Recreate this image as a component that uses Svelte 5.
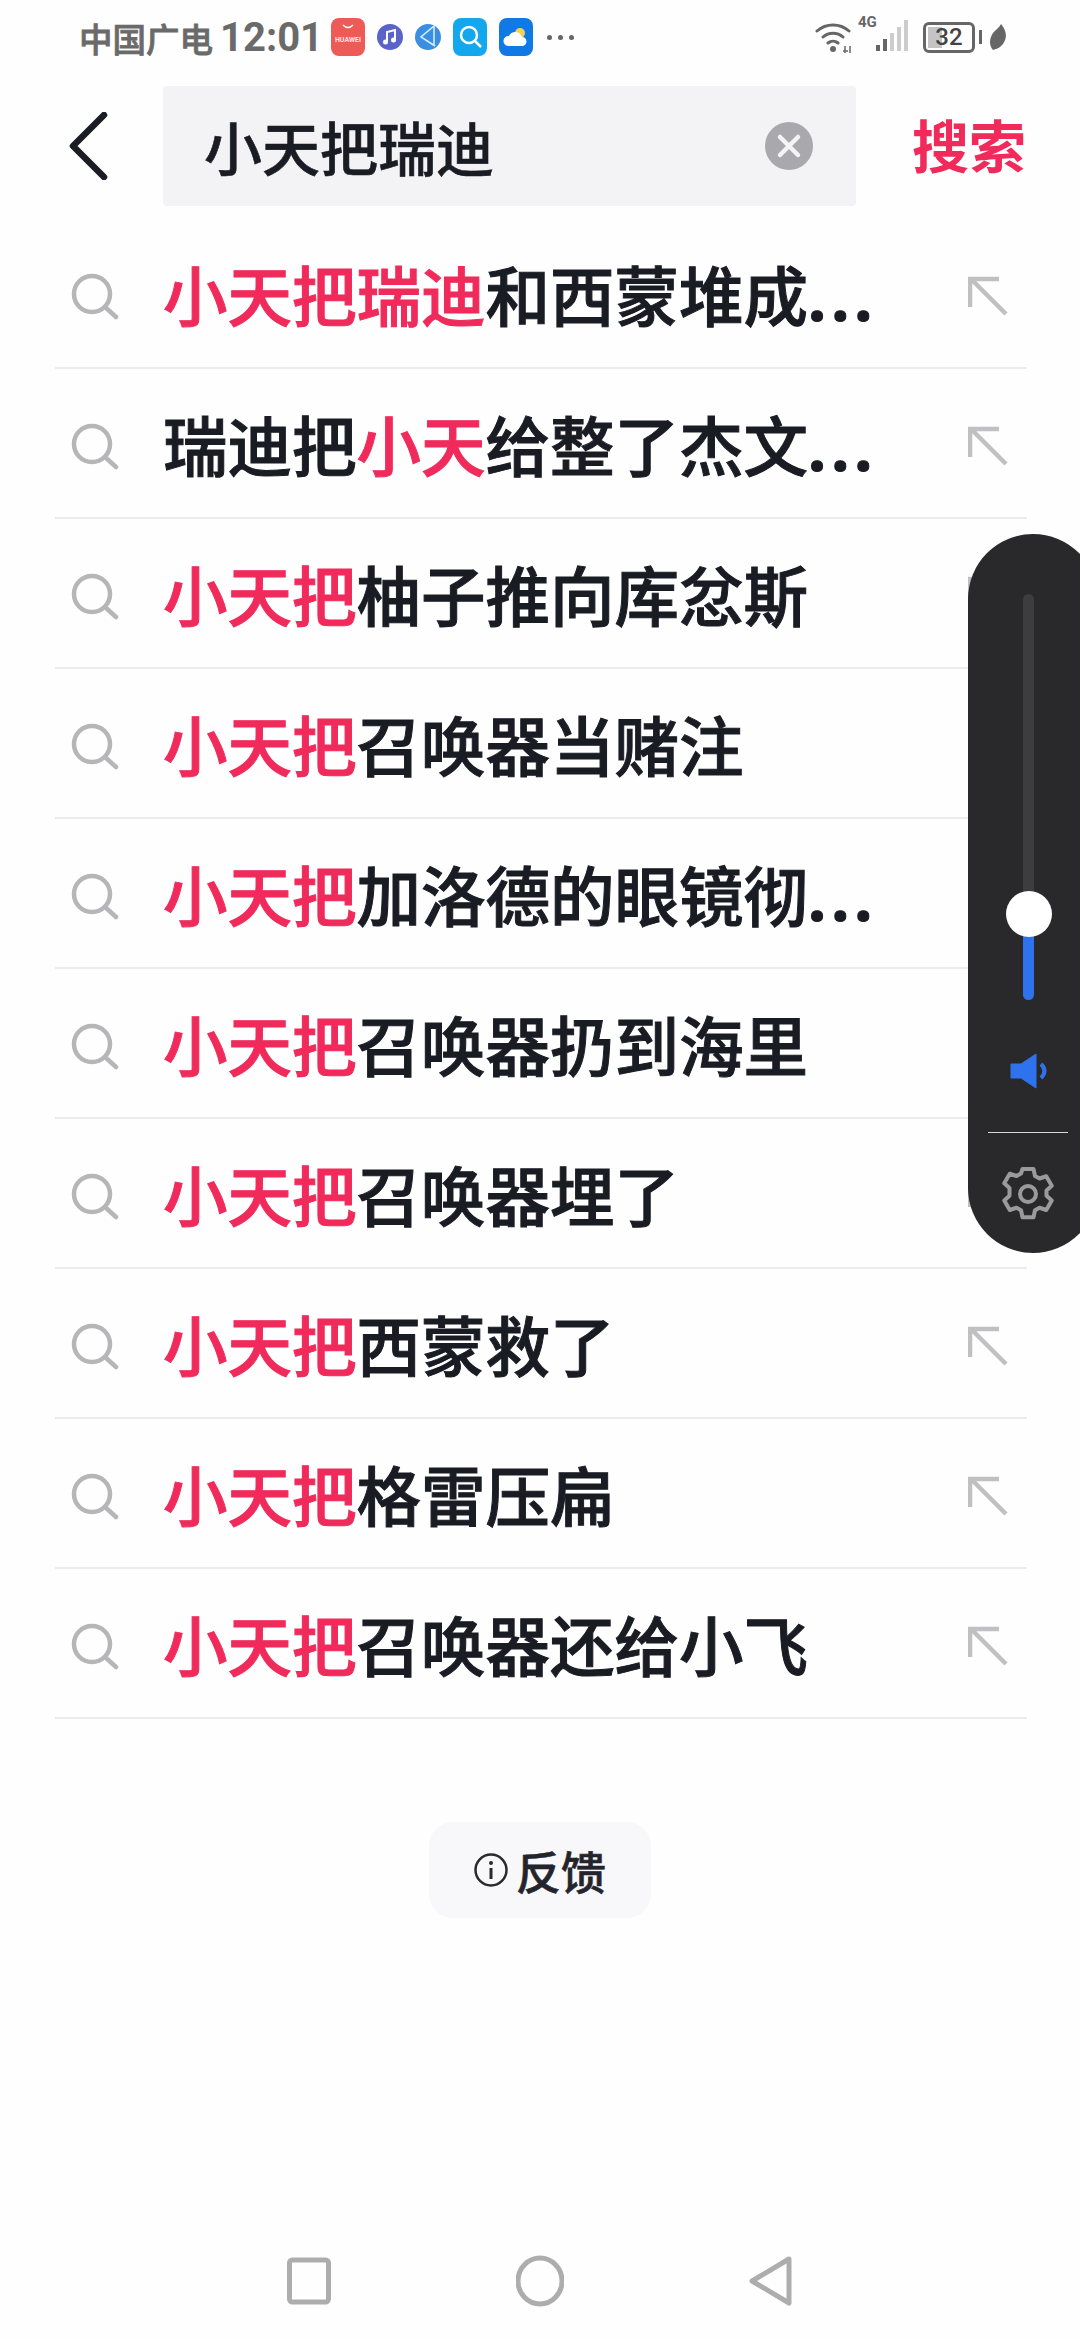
<script lang="ts">
  const rows = [
    { pre: "", hit: "小天把瑞迪", post: "和西蒙堆成", cut: true },
    { pre: "瑞迪把", hit: "小天", post: "给整了杰文", cut: true },
    { pre: "", hit: "小天把", post: "柚子推向库忿斯" },
    { pre: "", hit: "小天把", post: "召唤器当赌注" },
    { pre: "", hit: "小天把", post: "加洛德的眼镜彻", cut: true },
    { pre: "", hit: "小天把", post: "召唤器扔到海里" },
    { pre: "", hit: "小天把", post: "召唤器埋了" },
    { pre: "", hit: "小天把", post: "西蒙救了" },
    { pre: "", hit: "小天把", post: "格雷压扁" },
    { pre: "", hit: "小天把", post: "召唤器还给小飞" },
  ];
</script>

<div class="page">
  <div class="status">
    <div class="status-left">
      <span class="carrier">中国广电</span>
      <span class="clock">12:01</span>
      <svg class="notif" width="34" height="38" viewBox="0 0 34 38">
        <rect width="34" height="38" rx="8" fill="#ee5a55" />
        <path d="M12 7q5 5 10 0" fill="none" stroke="#fff" stroke-width="1.500" />
        <text x="17" y="24" text-anchor="middle" font-size="7" font-weight="700" fill="#fde3e1" font-family="Roboto, sans-serif">HUAWEI</text>
      </svg>
      <svg class="notif" width="26" height="28" viewBox="0 0 26 28">
        <circle cx="13" cy="14" r="13" fill="#5a64c8" />
        <path d="M10 19V9l8-2v10" fill="none" stroke="#fff" stroke-width="2" />
        <circle cx="8.500" cy="19" r="2.500" fill="#fff" />
        <circle cx="16.500" cy="17" r="2.500" fill="#fff" />
      </svg>
      <svg class="notif" width="26" height="28" viewBox="0 0 26 28">
        <circle cx="13" cy="14" r="13" fill="#3b8fe0" />
        <path d="M19 3L6 14l14 9M19 3v20" fill="none" stroke="#dcefff" stroke-width="1.500" />
      </svg>
      <svg class="notif" width="34" height="38" viewBox="0 0 34 38">
        <rect width="34" height="38" rx="8" fill="#13a8ee" />
        <circle cx="16" cy="17" r="8" fill="none" stroke="#fff" stroke-width="2.500" />
        <path d="M22 23l6 6" stroke="#fff" stroke-width="2.500" />
      </svg>
      <svg class="notif" width="34" height="38" viewBox="0 0 34 38">
        <rect width="34" height="38" rx="8" fill="#0f7ae5" />
        <circle cx="21" cy="15" r="5" fill="#f6cf55" />
        <path d="M9 28a5 5 0 0 1 1-10 7 7 0 0 1 13 1 4.500 4.500 0 0 1 0 9z" fill="#fff" />
      </svg>
      <span class="more"><i></i><i></i><i></i></span>
    </div>
    <div class="status-right">
      <svg width="38" height="34" viewBox="0 0 38 34">
        <path d="M2 11a24 24 0 0 1 32 0M8 17a15 15 0 0 1 20 0M13 23a8 8 0 0 1 10 0" fill="none" stroke="#666" stroke-width="3" stroke-linecap="round" />
        <circle cx="18" cy="29" r="3" fill="#666" />
        <path d="M28 31h5M30 26v7M35 26v7" stroke="#666" stroke-width="1.500" />
      </svg>
      <div class="net">
        <span class="net-label">4G</span>
        <svg width="34" height="32" viewBox="0 0 34 32">
          <rect x="0" y="26" width="4" height="6" fill="#666" />
          <rect x="7" y="20" width="4" height="12" fill="#666" />
          <rect x="14" y="14" width="4" height="18" fill="#ccc" />
          <rect x="21" y="8" width="4" height="24" fill="#ccc" />
          <rect x="28" y="1" width="4" height="31" fill="#ccc" />
        </svg>
      </div>
      <div class="battery">
        <div class="battery-fill"></div>
        <span>32</span>
      </div>
      <div class="battery-nub"></div>
      <svg width="18" height="28" viewBox="0 0 18 28">
        <path d="M12 1c5 6 7 13 2 20-3 4-7 5-10 6C0 22 0 16 4 10c2-3 6-5 8-9z" fill="#666" />
      </svg>
    </div>
  </div>

  <div class="search-bar">
    <svg class="back" width="40" height="68" viewBox="0 0 40 68">
      <path d="M36 3L5 34l31 31" fill="none" stroke="#1c1d24" stroke-width="6.500" stroke-linecap="round" stroke-linejoin="round" />
    </svg>
    <div class="field">
      <span class="query">小天把瑞迪</span>
      <svg width="48" height="48" viewBox="0 0 48 48">
        <circle cx="24" cy="24" r="24" fill="#a9a9ad" />
        <path d="M15 15l18 18M33 15L15 33" stroke="#f4f4f6" stroke-width="4.500" stroke-linecap="round" />
      </svg>
    </div>
    <span class="go">搜索</span>
  </div>

  <div class="list">
    {#each rows as row}
      <div class="row">
        <svg class="lens" width="48" height="48" viewBox="0 0 48 48">
          <circle cx="21" cy="21" r="18" fill="none" stroke="#b6b6b8" stroke-width="4.500" />
          <path d="M34 34l11 10" stroke="#b6b6b8" stroke-width="4.500" stroke-linecap="round" />
        </svg>
        <span class="label">{row.pre}<span class="hit">{row.hit}</span>{row.post}{#if row.cut}<span class="cut">...</span>{/if}</span>
        <svg class="fill-in" width="40" height="40" viewBox="0 0 40 40">
          <path d="M2 31V3h29M3 3l35 35" fill="none" stroke="#c0c0c2" stroke-width="4.500" />
        </svg>
      </div>
    {/each}
  </div>

  <div class="feedback-wrap">
    <div class="feedback">
      <svg width="34" height="34" viewBox="0 0 34 34">
        <circle cx="17" cy="17" r="15.500" fill="none" stroke="#2a2a30" stroke-width="2.500" />
        <circle cx="17" cy="10" r="2" fill="#2a2a30" />
        <path d="M17 15v11" stroke="#2a2a30" stroke-width="3" />
      </svg>
      <span>反馈</span>
    </div>
  </div>

  <div class="nav">
    <svg width="48" height="48" viewBox="0 0 48 48">
      <rect x="4.500" y="3" width="39" height="42" rx="3" fill="none" stroke="#adadad" stroke-width="5" />
    </svg>
    <svg width="48" height="52" viewBox="0 0 48 52">
      <ellipse cx="24" cy="26" rx="22" ry="23" fill="none" stroke="#adadad" stroke-width="5" />
    </svg>
    <svg width="48" height="52" viewBox="0 0 48 52">
      <path d="M42 4L5 26l37 22z" fill="none" stroke="#adadad" stroke-width="5" stroke-linejoin="round" />
    </svg>
  </div>

  <div class="volume">
    <div class="track"><div class="level"></div><div class="knob"></div></div>
    <svg class="speaker" width="40" height="36" viewBox="0 0 40 36">
      <path d="M1 11h10L26 1v34L11 25H1z" fill="#2f72ee" stroke="#2f72ee" stroke-linejoin="round" />
      <path d="M31 11q7 7 0 14" fill="none" stroke="#2f72ee" stroke-width="4" />
    </svg>
    <div class="vol-line"></div>
    <svg class="gear" width="60" height="60" viewBox="0 0 24 24">
      <circle cx="12" cy="12" r="3.200" fill="none" stroke="#9a9a9a" stroke-width="1.600" />
      <path d="M9.800 2h4.400l.6 2.800 1.800 1 2.700-.9 2.200 3.800-2.100 1.900v2.100l2.100 1.900-2.200 3.800-2.700-.9-1.800 1-.6 2.800H9.800l-.6-2.800-1.800-1-2.700.9-2.200-3.800 2.100-1.900V9.600L2.500 7.700l2.200-3.800 2.700.9 1.800-1z" fill="none" stroke="#9a9a9a" stroke-width="1.600" stroke-linejoin="round" />
    </svg>
  </div>
</div>

<style>
  :global(body) {
    margin: 0;
    background: #fefefe;
  }

  .page {
    position: relative;
    width: 1080px;
    height: 2340px;
    overflow: hidden;
    display: flex;
    flex-direction: column;
    background: #fefefe;
    font-family: "Noto Sans", "Noto Sans CJK SC", sans-serif;
    color: #1a1c24;
  }

  .status {
    height: 74px;
    box-sizing: border-box;
    padding: 0 73px 0 79px;
    display: flex;
    align-items: center;
    justify-content: space-between;
  }

  .status-left {
    display: flex;
    align-items: center;
  }

  .carrier {
    font-size: 33.500px;
    font-weight: 500;
    -webkit-text-stroke: 0.8px #6a6a6a;
    color: #6a6a6a;
    margin-right: 7px;
  }

  .clock {
    font-family: Roboto, sans-serif;
    font-size: 40px;
    font-weight: 700;
    color: #6a6a6a;
    margin-right: 8px;
  }

  .notif {
    margin-right: 12px;
  }

  .more {
    display: flex;
    gap: 6px;
    margin-left: 2px;
  }

  .more i {
    width: 5px;
    height: 5px;
    border-radius: 50%;
    background: #666;
  }

  .status-right {
    display: flex;
    align-items: center;
  }

  .net {
    position: relative;
    margin-left: 5px;
    padding-left: 18px;
  }

  .net-label {
    position: absolute;
    left: 0;
    top: -6px;
    font-family: Roboto, sans-serif;
    font-size: 15px;
    font-weight: 700;
    color: #666;
  }

  .battery {
    position: relative;
    width: 52px;
    height: 31px;
    margin-left: 13px;
    box-sizing: border-box;
    border: 3px solid #666;
    border-radius: 6px;
    display: flex;
    align-items: center;
    justify-content: center;
    font-family: Roboto, sans-serif;
    font-size: 24px;
    font-weight: 500;
    color: #444;
  }

  .battery span {
    position: relative;
  }

  .battery-fill {
    position: absolute;
    left: 2px;
    top: 2px;
    bottom: 2px;
    width: 14px;
    background: #c4c4c4;
  }

  .battery-nub {
    width: 3px;
    height: 14px;
    margin: 0 7px 0 4px;
    background: #666;
  }

  .search-bar {
    display: flex;
    align-items: flex-start;
    margin-top: 12px;
    height: 133px;
  }

  .back {
    margin: 26px 53px 0 70px;
    flex-shrink: 0;
    position: relative;
    left: -2px;
  }

  .field {
    width: 693px;
    height: 120px;
    box-sizing: border-box;
    padding: 0 43px 0 41px;
    background: #f3f3f5;
    border-radius: 4px;
    display: flex;
    align-items: center;
    justify-content: space-between;
  }

  .query {
    font-size: 58px;
    font-weight: 500;
    -webkit-text-stroke: 0.6px #1a1c24;
    line-height: 1;
    position: relative;
    top: 3px;
  }

  .go {
    margin: 21px 0 0 56px;
    font-size: 57px;
    font-weight: 700;
    line-height: 1.400;
    color: #f02b5b;
  }

  .list {
    margin: 0 53px 0 55px;
  }

  .row {
    height: 150px;
    box-sizing: border-box;
    border-bottom: 2px solid #ebebed;
    display: flex;
    align-items: center;
    padding-left: 16px;
    padding-right: 19px;
  }

  .lens {
    flex-shrink: 0;
    margin: 8px 44px 0 0;
  }

  .label {
    flex: 1;
    font-size: 64.500px;
    font-weight: 500;
    -webkit-text-stroke: 1px currentColor;
    line-height: 1;
    white-space: nowrap;
    position: relative;
    top: 3px;
  }

  .hit {
    color: #f02b5b;
  }

  .cut {
    font-family: "Noto Sans", sans-serif;
    font-weight: 700;
    letter-spacing: 5px;
    margin-left: 0;
  }

  .fill-in {
    flex-shrink: 0;
    margin-top: 5px;
  }

  .feedback-wrap {
    display: flex;
    justify-content: center;
    margin-top: 103px;
  }

  .feedback {
    width: 222px;
    height: 96px;
    box-sizing: border-box;
    background: #f8f8fa;
    border-radius: 24px;
    display: flex;
    align-items: center;
    justify-content: center;
    gap: 8px;
    font-size: 45px;
    font-weight: 500;
    -webkit-text-stroke: 0.6px #24252c;
    color: #24252c;
  }

  .nav {
    margin-top: auto;
    padding-bottom: 33px;
    display: flex;
    justify-content: center;
    align-items: center;
    gap: 183px;
  }

  .volume {
    position: absolute;
    left: 968px;
    top: 534px;
    width: 130px;
    height: 719px;
    border-radius: 66px;
    background: #29292b;
    display: flex;
    flex-direction: column;
    align-items: flex-start;
  }

  .track {
    position: relative;
    width: 11px;
    height: 406px;
    margin: 60px 0 0 55px;
    border-radius: 6px;
    background: #3d3d40;
  }

  .level {
    position: absolute;
    left: 0;
    right: 0;
    bottom: 0;
    height: 86px;
    border-radius: 0 0 6px 6px;
    background: #2f72ee;
  }

  .knob {
    position: absolute;
    left: -17px;
    top: 297px;
    width: 46px;
    height: 46px;
    border-radius: 50%;
    background: #fff;
  }

  .speaker {
    margin: 53px 0 0 42px;
  }

  .vol-line {
    width: 80px;
    height: 1px;
    margin: 43px 0 0 20px;
    background: #d8d8d8;
  }

  .gear {
    margin: 31px 0 0 30px;
  }
</style>
